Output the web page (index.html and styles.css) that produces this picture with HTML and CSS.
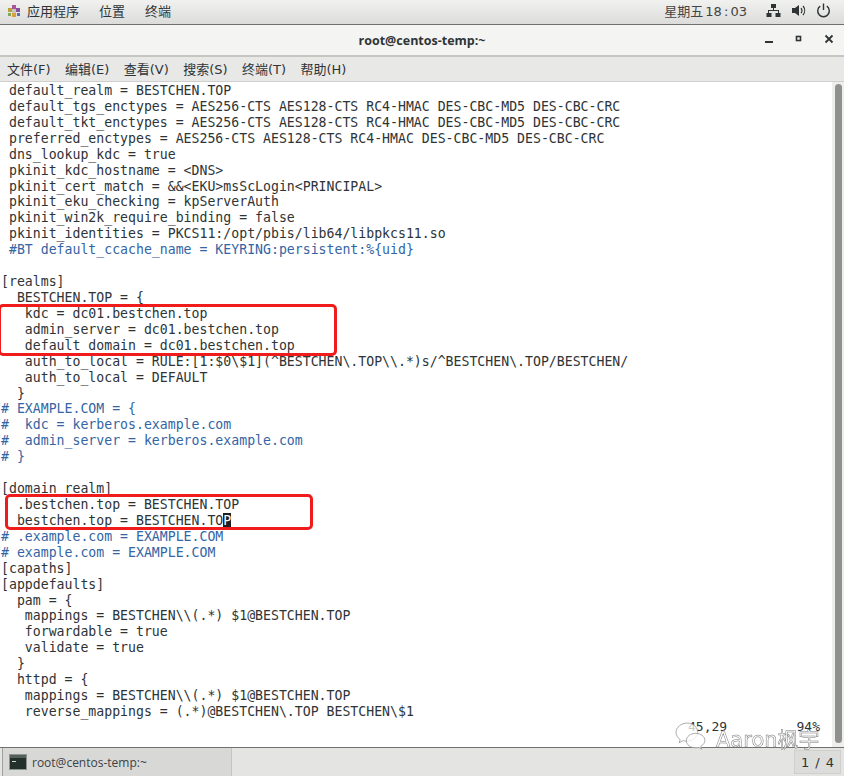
FILE: index.html
```html
<!DOCTYPE html>
<html lang="zh">
<head>
<meta charset="utf-8">
<title>root@centos-temp:~</title>
<link rel="stylesheet" href="styles.css">
</head>
<body>
<div class="desktop">
  <header class="topbar">
    <nav class="top-left">
      <span class="app-menu">
        <svg class="logo" width="14" height="14" viewBox="0 0 14 14">
          <rect x="1" y="4" width="4" height="4" fill="#b8a13a"/>
          <rect x="5" y="1" width="4" height="4" fill="#a8559a"/>
          <rect x="9" y="4" width="4" height="4" fill="#8a4f9e"/>
          <rect x="5" y="9" width="4" height="4" fill="#d9a03a"/>
          <rect x="1" y="9" width="3" height="3" fill="#7fa65a"/>
          <rect x="10" y="9" width="3" height="3" fill="#5a6fa8"/>
          <rect x="5" y="5" width="4" height="4" fill="#c8c4b8"/>
        </svg>
        应用程序
      </span>
      <span>位置</span>
      <span>终端</span>
    </nav>
    <div class="top-right">
      <span class="clock">星期五 18 : 03</span>
      <svg width="15" height="15" viewBox="0 0 15 15" fill="#2e3436"><rect x="5" y="1" width="5" height="4"/><rect x="7" y="5" width="1" height="3"/><rect x="2" y="7" width="11" height="1"/><rect x="2" y="7" width="1" height="3"/><rect x="12" y="7" width="1" height="3"/><rect x="0.5" y="10" width="5" height="4"/><rect x="9.5" y="10" width="5" height="4"/></svg>
      <svg width="15" height="15" viewBox="0 0 15 15" fill="none" stroke="#2e3436"><path d="M1 5h3l4-3v11l-4-3H1z" fill="#2e3436" stroke="none"/><path d="M10 5a4 4 0 0 1 0 5" stroke-width="1.2"/><path d="M12 3a7 7 0 0 1 0 9" stroke-width="1.2"/></svg>
      <svg width="15" height="15" viewBox="0 0 15 15" fill="none" stroke="#2e3436" stroke-width="1.4"><path d="M4.2 3.2a5.8 5.8 0 1 0 6.6 0"/><path d="M7.5 0.5v6.5"/></svg>
    </div>
  </header>

  <div class="titlebar">
    <span class="title">root@centos-temp:~</span>
    <div class="win-buttons">
      <svg width="10" height="10" viewBox="0 0 10 10"><rect x="1" y="7" width="8" height="2" fill="#2e3436"/></svg>
      <svg width="10" height="10" viewBox="0 0 10 10" fill="none"><rect x="2.5" y="2.5" width="4" height="4" stroke="#2e3436" stroke-width="1.6"/></svg>
      <svg width="10" height="10" viewBox="0 0 10 10" stroke="#2e3436" stroke-width="1.8"><path d="M1.500 1.500l7 7M8.500 1.500l-7 7"/></svg>
    </div>
  </div>

  <nav class="menubar">
    <span>文件(F)</span><span>编辑(E)</span><span>查看(V)</span><span>搜索(S)</span><span>终端(T)</span><span>帮助(H)</span>
  </nav>

  <main class="terminal">
<pre class="code"> default_realm = BESTCHEN.TOP
 default_tgs_enctypes = AES256-CTS AES128-CTS RC4-HMAC DES-CBC-MD5 DES-CBC-CRC
 default_tkt_enctypes = AES256-CTS AES128-CTS RC4-HMAC DES-CBC-MD5 DES-CBC-CRC
 preferred_enctypes = AES256-CTS AES128-CTS RC4-HMAC DES-CBC-MD5 DES-CBC-CRC
 dns_lookup_kdc = true
 pkinit_kdc_hostname = &lt;DNS&gt;
 pkinit_cert_match = &amp;&amp;&lt;EKU&gt;msScLogin&lt;PRINCIPAL&gt;
 pkinit_eku_checking = kpServerAuth
 pkinit_win2k_require_binding = false
 pkinit_identities = PKCS11:/opt/pbis/lib64/libpkcs11.so
<span class="blue"> #BT default_ccache_name = KEYRING:persistent:%{uid}</span>

[realms]
  BESTCHEN.TOP = {
   kdc = dc01.bestchen.top
   admin_server = dc01.bestchen.top
   default_domain = dc01.bestchen.top
   auth_to_local = RULE:[1:$0\$1](^BESTCHEN\.TOP\\.*)s/^BESTCHEN\.TOP/BESTCHEN/
   auth_to_local = DEFAULT
  }
<span class="blue"># EXAMPLE.COM = {
#  kdc = kerberos.example.com
#  admin_server = kerberos.example.com
# }</span>

[domain_realm]
  .bestchen.top = BESTCHEN.TOP
  bestchen.top = BESTCHEN.TO<span class="cursor">P</span>
<span class="blue"># .example.com = EXAMPLE.COM
# example.com = EXAMPLE.COM</span>
[capaths]
[appdefaults]
  pam = {
   mappings = BESTCHEN\\(.*) $1@BESTCHEN.TOP
   forwardable = true
   validate = true
  }
  httpd = {
   mappings = BESTCHEN\\(.*) $1@BESTCHEN.TOP
   reverse_mappings = (.*)@BESTCHEN\.TOP BESTCHEN\$1</pre>
    <div class="scrollbar"><div class="thumb"></div></div>
    <div class="status"><span>45,29</span><span>94%</span></div>
    <div class="mark mark-a"></div>
    <div class="mark mark-b"></div>
  </main>

  <footer class="taskbar">
    <div class="task">
      <svg width="18" height="16" viewBox="0 0 18 16"><rect x="0.5" y="0.5" width="17" height="15" fill="#23302c" stroke="#8b9490"/><rect x="1" y="1" width="16" height="3" fill="#55605c"/><rect x="3" y="7" width="4" height="1" fill="#d5d8d4"/></svg>
      <span>root@centos-temp:~</span>
    </div>
    <div class="pager">1 / 4</div>
  </footer>

  <div class="watermark">
    <svg width="33" height="31" viewBox="0 0 32 30" fill="rgba(255,255,255,.75)" stroke="#9a9a9a" stroke-width="0.8"><path d="M12 1C6 1 1 5 1 10c0 3 1.500 5 4 7l-1 3 4-2c1 .3 2 .5 3 .5 6 0 11-4 11-8.500S18 1 12 1z"/><path d="M20 11c-5 0-9 3-9 7s4 7 9 7c1 0 2 0 3-.4l3 1.800-1-3c2.500-1.400 4-3.400 4-5.400 0-4-4-7-9-7z"/></svg>
    <span>Aaron枫宇</span>
  </div>
</div>
</body>
</html>
```
FILE: styles.css
```css
* { box-sizing: border-box; }
html, body { margin: 0; padding: 0; }
body { width: 844px; height: 776px; overflow: hidden; background: #fff; }
.desktop {
  position: relative;
  width: 844px;
  height: 776px;
  display: flex;
  flex-direction: column;
  font-family: "DejaVu Sans", "Noto Sans CJK SC", sans-serif;
  color: #2e3436;
  filter: blur(0.35px);
}
.topbar {
  height: 25px;
  flex: none;
  display: flex;
  justify-content: space-between;
  align-items: center;
  padding: 0 13px 3px 7px;
  background: linear-gradient(#f1f1f0, #dcdcda);
  border-bottom: 1px solid #6f7170;
  font-size: 13px;
}
.top-left { display: flex; gap: 20px; align-items: center; }
.app-menu { display: flex; gap: 6px; align-items: center; }
.top-right { display: flex; align-items: center; gap: 10px; }
.clock { margin-right: 9px; color: #444; font-size: 13px; word-spacing: -2px; }
.titlebar {
  position: relative;
  height: 32px;
  flex: none;
  display: flex;
  justify-content: center;
  align-items: center;
  background: #f4f4f3;
  border-bottom: 2px solid #c6c6c0;
}
.title { font-family: "Open Sans", sans-serif; font-size: 12.5px; font-weight: 700; }
.win-buttons {
  position: absolute;
  right: 10px;
  top: 9px;
  display: flex;
  gap: 20px;
}
.menubar {
  height: 25px;
  flex: none;
  display: flex;
  gap: 14.4px;
  align-items: center;
  padding: 0 7px 2px;
  background: #e8e8e7;
  border-bottom: 1px solid #cfcfcd;
  font-size: 13px;
}
.terminal {
  position: relative;
  flex: 1;
  min-height: 0;
  background: #fff;
}
.code {
  margin: 0;
  padding: 1px 0 0 1px;
  font-family: "DejaVu Sans Mono", "Noto Sans CJK SC", monospace;
  font-size: 13.2px;
  line-height: 15.92px;
  color: #2e3436;
}
.blue { color: #3465a4; }
.cursor { background: #1d1f20; color: #fff; }
.scrollbar {
  position: absolute;
  top: 0;
  right: 0;
  bottom: 0;
  width: 12px;
  background: #eeeeed;
}
.thumb {
  position: absolute;
  top: 2px;
  right: 2px;
  width: 7px;
  height: 659px;
  border-radius: 4px;
  background: #8e9190;
}
.status {
  position: absolute;
  left: 688px;
  top: 637px;
  width: 132px;
  display: flex;
  justify-content: space-between;
  font-family: "DejaVu Sans Mono", monospace;
  font-size: 13px;
  line-height: 16px;
}
.mark {
  position: absolute;
  border: 3px solid #f01c1c;
  border-radius: 5px;
}
.mark-a { left: -2px; top: 222px; width: 339px; height: 52px; }
.mark-b { left: 5px; top: 412px; width: 308px; height: 36px; }
.taskbar {
  height: 29px;
  flex: none;
  display: flex;
  justify-content: space-between;
  align-items: stretch;
  padding: 0 0 0 2px;
  background: #e4e4e2;
  border-top: 1px solid #6f7170;
}
.task {
  width: 230px;
  display: flex;
  align-items: center;
  gap: 5px;
  padding-left: 6px;
  background: #d8d8d6;
  border-left: 1px solid #a0a09e;
  border-right: 1px solid #c4c4c2;
  font-family: "Open Sans", sans-serif;
  font-size: 12px;
  color: #3c4245;
}
.pager {
  width: 47px;
  margin: 2px 3px 2px 0;
  display: flex;
  align-items: center;
  justify-content: center;
  background: #dcdcda;
  border: 1px solid #cfcfcd;
  font-size: 13px;
  word-spacing: 2px;
}
.watermark {
  position: absolute;
  left: 675px;
  top: 722px;
  display: flex;
  align-items: center;
  gap: 8px;
  color: rgba(255,255,255,.9);
  font-size: 21px;
  -webkit-text-stroke: 0.5px #777;
}
```
